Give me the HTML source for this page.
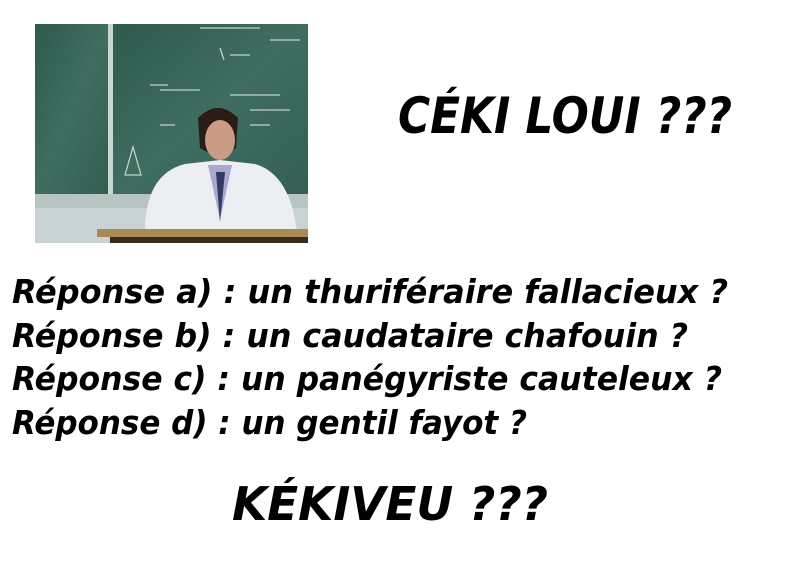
<!DOCTYPE html>
<html><head><meta charset="utf-8"><style>
html,body{margin:0;padding:0;background:#fff;}
body{width:800px;height:566px;position:relative;overflow:hidden;}
svg{position:absolute;left:0;top:0;}
text{font-family:"DejaVu Sans Condensed","DejaVu Sans","Liberation Sans",sans-serif;font-weight:bold;font-style:italic;fill:#000;}
text.a{font-family:"DejaVu Sans","Liberation Sans",sans-serif;}
</style></head><body>
<svg width="800" height="566" viewBox="0 0 800 566">
  <defs>
    <linearGradient id="bd" x1="0" y1="0" x2="1" y2="1">
      <stop offset="0" stop-color="#2f5a4e"/><stop offset="0.5" stop-color="#3f6d60"/><stop offset="1" stop-color="#345f53"/>
    </linearGradient>
  </defs>
  <rect x="35" y="24" width="273" height="219" fill="#5f7f77"/>
  <rect x="35" y="24" width="73" height="170" fill="url(#bd)"/>
  <rect x="113" y="24" width="195" height="175" fill="url(#bd)"/>
  <rect x="108" y="24" width="5" height="175" fill="#c9d6d2"/>
  <rect x="35" y="194" width="273" height="14" fill="#b8c4c2"/>
  <rect x="35" y="208" width="273" height="35" fill="#c9d2d4"/>
  <g stroke="#d8e4e0" stroke-width="1.3" fill="none" opacity="0.85">
    <path d="M200 28h60M220 48l4 12M230 55h20M270 40h30M150 85h18M160 90h40M230 95h50M250 110h40M160 125h15M250 125h20M125 175l8-28l8 28z"/>
  </g>
  <path d="M198 118q20-20 40 0l-2 30q-18 12-36 0z" fill="#2a1d18"/>
  <ellipse cx="220" cy="140" rx="15" ry="20" fill="#c99a84"/>
  <path d="M145 232q0-58 40-68l35-4l35 4q35 10 42 68z" fill="#eceef2"/>
  <path d="M208 165l12 55l12-55z" fill="#a9a8d2"/>
  <path d="M216 172l4 50l5-50z" fill="#323a60"/>
  <rect x="97" y="229" width="211" height="8" fill="#a98a52"/>
  <rect x="110" y="237" width="198" height="6" fill="#3a2c1c"/>

  <text x="398" y="133" font-size="50" textLength="334" lengthAdjust="spacingAndGlyphs">CÉKI LOUI ???</text>
  <text class="a" x="12" y="303" font-size="33" textLength="716" lengthAdjust="spacingAndGlyphs">Réponse a) : un thuriféraire fallacieux ?</text>
  <text class="a" x="12" y="347" font-size="33" textLength="676" lengthAdjust="spacingAndGlyphs">Réponse b) : un caudataire chafouin ?</text>
  <text class="a" x="12" y="390" font-size="33" textLength="710" lengthAdjust="spacingAndGlyphs">Réponse c) : un panégyriste cauteleux ?</text>
  <text class="a" x="12" y="434" font-size="33" textLength="515" lengthAdjust="spacingAndGlyphs">Réponse d) : un gentil fayot ?</text>
  <text x="232" y="520" font-size="46" textLength="316" lengthAdjust="spacingAndGlyphs">KÉKIVEU ???</text>
</svg>
</body></html>
